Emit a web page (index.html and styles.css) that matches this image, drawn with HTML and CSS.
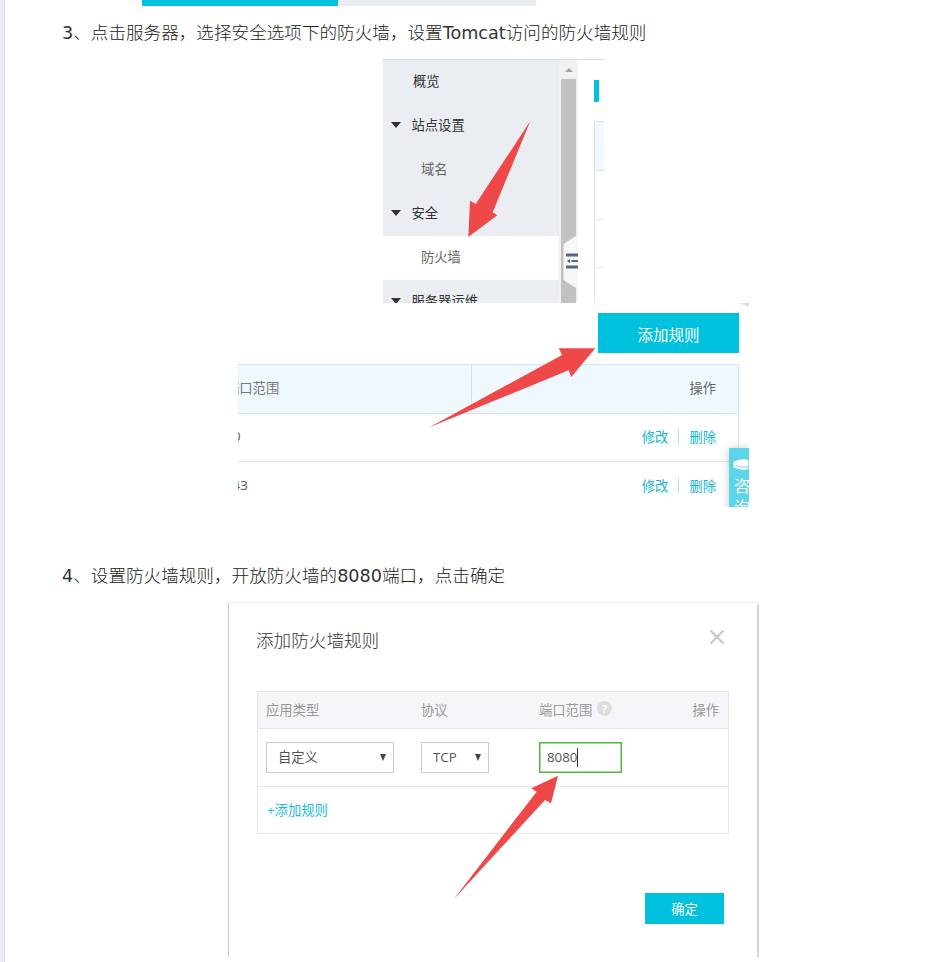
FILE: index.html
```html
<!DOCTYPE html>
<html lang="zh-CN">
<head>
<meta charset="utf-8">
<title>防火墙规则</title>
<link rel="stylesheet" href="styles.css">
</head>
<body>
<main class="page">
  <div class="strip"><span class="strip-on"></span><span class="strip-off"></span></div>
  <p class="step"><span class="latin">3</span>、点击服务器，选择安全选项下的防火墙，设置<span class="latin">Tomcat</span>访问的防火墙规则</p>

  <figure class="shot console">
    <nav class="nav">
      <div class="item">概览</div>
      <div class="item group">站点设置</div>
      <div class="item sub">域名</div>
      <div class="item group">安全</div>
      <div class="item sub active">防火墙</div>
      <div class="item group">服务器运维</div>
    </nav>
    <div class="scroll"><i class="up"></i><i class="thumb"></i></div>
    <div class="side">
      <div class="mark"></div>
      <div class="cell head"></div>
      <div class="cell"></div>
      <div class="cell"></div>
      <div class="cell"></div>
    </div>
    <svg class="overlay" width="221" height="244" viewBox="0 0 221 244">
      <path fill="#f7f7f7" d="M180.500 185 193 177h2v52h-2l-12.500-8z"/>
      <path fill="#56677f" d="M183 194.500h12v3h-12zM183 206.500h12v3h-12zM188.500 201h6.500v2h-6.500zM187 199.700v4.600l-3-2.300z"/>
      <path class="arrow" d="M85.300 178 87 141.700l5.700 3.300L147.300 62l-37.600 91.300 4.600 3z"/>
    </svg>
  </figure>

  <figure class="shot rules">
    <div class="bar"><span class="button add">添加规则</span></div>
    <div class="grid">
      <div class="line top"><span class="clip port">端口范围</span><span class="ops">操作</span></div>
      <div class="line"><span class="clip p80">80</span><span class="ops"><a>修改</a><i></i><a>删除</a></span></div>
      <div class="line"><span class="clip p443">443</span><span class="ops"><a>修改</a><i></i><a>删除</a></span></div>
    </div>
    <div class="corner"></div>
    <div class="chat">
      <svg width="16" height="13" viewBox="0 0 16 13"><path fill="#fff" d="M0 3Q8-1 16 1v10Q7 13 0 9z"/><path d="M3 7q5 3 13 1" fill="none" stroke="#5cd4ea"/></svg>
      <span>咨</span><span>询</span>
    </div>
    <svg class="overlay" width="511" height="204" viewBox="0 0 511 204">
      <path class="arrow" d="M357.300 45.300h-36.600l3.300 6.700-133 72.500 139.700-57.200 2.600 6.700z"/>
    </svg>
  </figure>

  <p class="step second"><span class="latin">4</span>、设置防火墙规则，开放防火墙的<span class="latin">8080</span>端口，点击确定</p>

  <figure class="shot dialog">
    <header class="title"><span>添加防火墙规则</span>
      <svg width="16" height="16" viewBox="0 0 16 16"><path d="M1.500 1.500l13 13m0-13l-13 13" stroke="#c8c8c8" stroke-width="2.200"/></svg>
    </header>
    <div class="form">
      <div class="fields labels"><span>应用类型</span><span>协议</span><span class="range">端口范围<b class="help">?</b></span><span>操作</span></div>
      <div class="fields values"><span class="select wide">自定义<i></i></span><span class="select">TCP<i></i></span><span class="input">8080<i></i></span></div>
      <div class="more">+添加规则</div>
    </div>
    <div class="foot"><span class="button ok">确定</span></div>
    <div class="edge"></div>
    <svg class="overlay" width="531" height="355" viewBox="0 0 531 355">
      <path class="arrow" d="M330 173.700l-26.700 12.600 5.400 3.400-83.400 108L317 198l6 3.300z"/>
    </svg>
  </figure>
</main>
</body>
</html>
```
FILE: styles.css
```css
* { box-sizing: border-box; }
body {
  margin: 0;
  height: 962px;
  overflow: hidden;
  background: #ecebf2;
  font-family: "Open Sans", "Noto Sans CJK SC", sans-serif;
  font-size: 13.3px;
  color: #333;
}
.page {
  height: 962px;
  margin-left: 4px;
  padding: 0 25px 0 58px;
  border-left: 1px solid #dcdbe0;
  background: #fff;
}
.strip { display: flex; height: 6px; margin-left: 79px; }
.strip-on { width: 196px; background: #00c1de; }
.strip-off { width: 198px; background: #eaedf1; }
.step {
  height: 53px;
  margin: 0 0 0 -1px;
  line-height: 55px;
  font-family: "DejaVu Sans", "Noto Sans CJK SC", sans-serif;
  font-size: 17.6px;
  font-weight: 300;
  color: #222;
  white-space: nowrap;
}
.latin { font-weight: 400; color: #333; }
.step.second { margin-top: 42px; }
.shot { position: relative; margin: 0 auto; overflow: hidden; }
.overlay { position: absolute; left: 0; top: 0; }
.arrow { fill: #ee4848; }
.button {
  display: flex;
  align-items: center;
  justify-content: center;
  background: #00c1de;
  color: #fff;
}

.console { display: flex; width: 221px; height: 244px; border-top: 1px solid #d9dee6; }
.console .overlay { top: -1px; }
.nav { width: 176px; background: #eaedf1; }
.item { height: 44px; padding-left: 30px; line-height: 42px; }
.group { display: flex; align-items: center; padding: 0 0 2px 8px; }
.group::before {
  content: "";
  margin-right: 10.500px;
  border: 5.5px solid transparent;
  border-top: 6px solid #333;
  border-bottom: 0;
}
.sub { padding-left: 38px; color: #666; }
.active { background: #fff; }
.scroll { width: 19px; padding: 8px 2px 0; background: #f1f1f1; }
.up {
  display: block;
  width: 8px;
  margin: 0 auto 7px;
  border: 4px solid transparent;
  border-bottom: 4px solid #a3a3a3;
  border-top: 0;
}
.thumb { display: block; height: 226px; background: #c1c1c1; }
.side { width: 10px; margin: 20px 0 0 16px; }
.mark { width: 5px; height: 22px; margin-bottom: 19px; background: #00c1de; }
.cell { height: 48.500px; border-left: 1px solid #e3e8f0; border-bottom: 1px solid #e3e8f0; }
.cell.head { height: 50px; border: 1px solid #cfe4fb; border-right: 0; background: #f0f7ff; }

.rules { width: 511px; height: 204px; }
.bar { display: flex; padding: 10px 10px 11px 0; justify-content: flex-end; }
.add { width: 141px; height: 40px; padding-bottom: 1px; padding-top: 4px; font-size: 15.5px; }
.grid { width: 501px; height: 146px; border-right: 1px solid #e6e8f0; }
.line {
  display: flex;
  height: 48px;
  padding-bottom: 2px;
  align-items: center;
  justify-content: space-between;
  border-bottom: 1px solid #e6e8f0;
  color: #555;
}
.line + .line + .line { border: 0; height: 49px; }
.line.top {
  width: 501px;
  height: 49.500px;
  border: 1px solid #cfe5fc;
  border-left: 0;
  background: linear-gradient(#cfe5fc, #cfe5fc) 233px 0 / 1px 100% no-repeat #f0f8ff;
  color: #777;
}
.port { margin-left: -12px; }
.p80 { margin-left: -12.500px; }
.p443 { margin-left: -13px; }
.ops { display: flex; align-items: center; padding-right: 22px; }
.top .ops { color: #666; }
.ops a { color: #16b6d6; }
.ops i { width: 1px; height: 14px; margin: 0 10px; background: #b9dbd5; }
.corner {
  position: absolute;
  right: 0;
  top: 0;
  width: 14px;
  height: 6px;
  background: linear-gradient(to top right, transparent 50%, #ccc);
}
.chat {
  position: absolute;
  left: 491px;
  top: 145px;
  display: flex;
  flex-direction: column;
  width: 20px;
  height: 70px;
  padding: 11px 0 0 5px;
  background: #5cd4ea;
  box-shadow: 0 0 9px rgba(0, 0, 0, .22);
  color: #fff;
  font-size: 16px;
  line-height: 21px;
}
.chat svg { margin: 0 0 5px -1px; }

.dialog {
  width: 531px;
  height: 355px;
  padding: 0 30px 0 28px;
  border-top: 1px solid #eee;
  border-left: 1px solid #ccc;
}
.dialog .overlay { left: -1px; top: -1px; }
.title {
  display: flex;
  height: 88px;
  padding: 0 4px 14px 0;
  align-items: center;
  justify-content: space-between;
  font-size: 17.6px;
  font-weight: 300;
}
.title span { margin: -2px 0 0 -1px; }
.title svg { margin-top: -7px; }
.form { height: 143px; border: 1px solid #e3e7ee; color: #999; }
.fields { display: grid; grid-template-columns: 155px 118px 153.500px 1fr; padding-left: 8px; align-items: center; }
.labels { height: 37px; padding-bottom: 2px; border-bottom: 1px solid #e3e7ee; background: #f4f6fa; }
.values { height: 58px; border-bottom: 1px solid #e3e7ee; color: #555; }
.range { display: flex; align-items: center; }
.help {
  width: 15px;
  height: 15px;
  margin: -1px 0 0 5px;
  border-radius: 50%;
  background: #ddd;
  color: #fff;
  font-size: 11px;
  line-height: 15px;
  text-align: center;
}
.select {
  display: flex;
  width: 68px;
  height: 31px;
  padding: 0 7px 2px 11px;
  align-items: center;
  justify-content: space-between;
  border: 1.500px solid #ccc;
}
.select.wide { width: 128px; }
.select i { margin-top: 2px; border: 3.500px solid transparent; border-top: 7px solid #444; border-bottom: 0; }
.input { display: flex; width: 83px; height: 31px; padding: 0 0 1px 7px; align-items: center; border: 1px solid #4fb83c; box-shadow: inset 0 0 0 .5px #4fb83c; }
.input i { width: 1px; height: 19px; background: #333; }
.more { padding-left: 9px; line-height: 46px; color: #1fbcd9; }
.foot { display: flex; justify-content: flex-end; padding: 59px 5px 0 0; }
.ok { width: 79px; height: 31px; }
.edge {
  position: absolute;
  right: 0;
  top: 1px;
  width: 2px;
  height: 354px;
  background: linear-gradient(90deg, #ccc, #ddd);
}
```
